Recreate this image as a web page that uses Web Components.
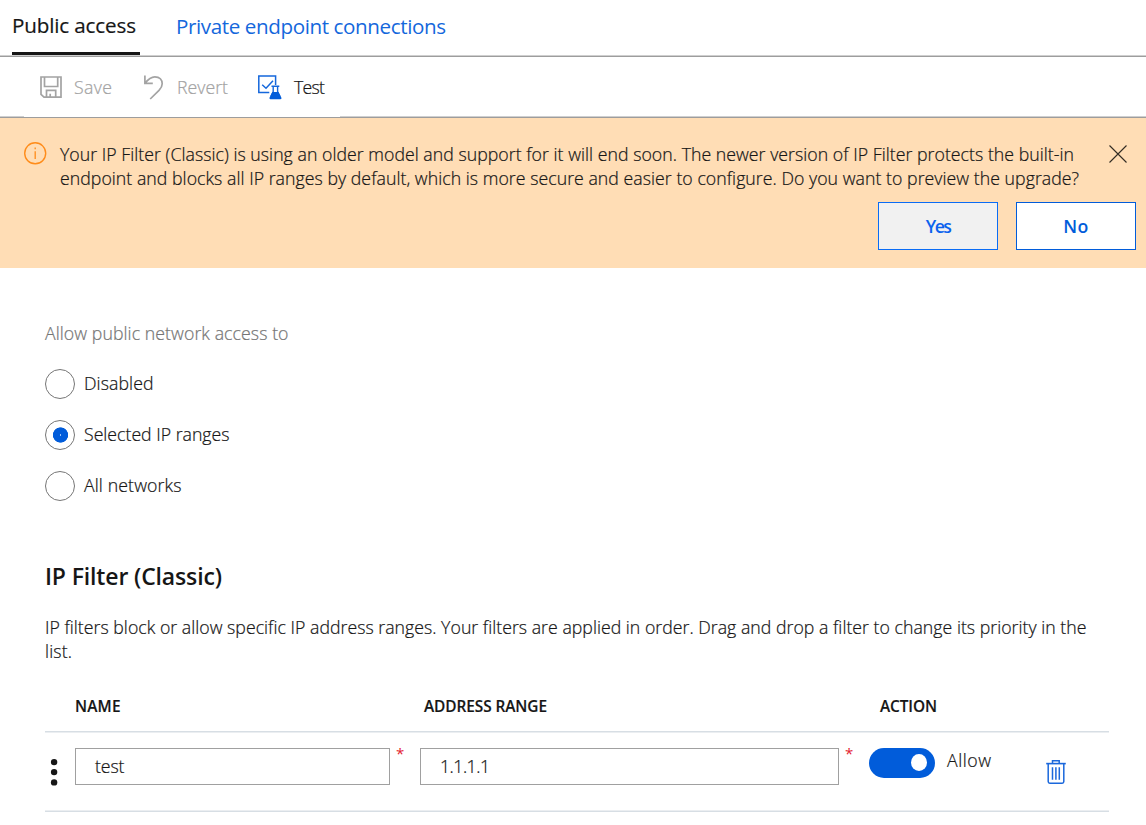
<!DOCTYPE html>
<html lang="en">
<head>
<meta charset="utf-8">
<title>Public access</title>
<style>
html,body{margin:0;background:#fff;overflow:hidden}
body{font-family:"Open Sans","Noto Sans",sans-serif;font-size:17.7px;font-weight:300;-webkit-text-stroke:.22px;color:#161616}
</style>
</head>
<body>
<network-page></network-page>
<script>
function define(name, html, setup) {
  const template = document.createElement('template');
  template.innerHTML = html;
  customElements.define(name, class extends HTMLElement {
    connectedCallback() {
      if (this.shadowRoot) return;
      this.attachShadow({mode: 'open'}).append(template.content.cloneNode(true));
      if (setup) setup(this, this.shadowRoot);
    }
  });
}

/* One line of text tracked to a given measure, set with the w attribute. */
define('text-line', `<style>
:host{display:block;white-space:pre;line-height:24px;height:24px}
span{display:inline-block}
</style><span><slot></slot></span>`, (el, root) => {
  const span = root.querySelector('span');
  const width = parseFloat(el.getAttribute('w'));
  const count = el.textContent.length;
  if (width && count > 1) {
    const extra = (width - span.getBoundingClientRect().width) / (count - 1);
    span.style.letterSpacing = extra.toFixed(4) + 'px';
  }
});

define('tab-bar', `<style>
:host{display:flex;box-sizing:border-box;height:57px;padding-left:12px;gap:36px;border-bottom:1px solid #9d9d9d;box-shadow:inset 0 -1px #cfcfcf;font-size:20.6px}
.tab{box-sizing:border-box;height:55px;padding-top:13px;font-weight:400;-webkit-text-stroke:0}
.active{width:128px;border-bottom:3px solid #161616;-webkit-text-stroke:.2px}
.link{color:#1467dc;padding-top:14px}
</style>
<div class="tab active"><text-line w="124">Public access</text-line></div>
<div class="tab link"><text-line w="270">Private endpoint connections</text-line></div>`);

define('tool-button', `<style>
:host{display:flex;align-items:flex-start;color:#161616}
:host([disabled]){color:#a3a3a3}
::slotted(svg){display:block;flex:none}
</style><slot></slot>`);

define('command-bar', `<style>
:host{display:flex;box-sizing:border-box;height:61px;padding:18px 0 0 39px;border-bottom:1px solid #9d9d9d;
background:linear-gradient(90deg,#cfcfcf 24px,transparent 24px 340px,#cfcfcf 340px) 0 100%/100% 1px no-repeat}
svg{fill:none}
tool-button[disabled] svg{stroke:#a3a3a3}
.test svg{stroke:#1467dc}
.save{width:104px}.revert{width:113px}
</style>
<tool-button class="save" disabled><svg width="24" height="25" viewBox="0 0 24 25" stroke-width="1.7" style="margin-right:11px"><path d="M2 2H22V22.2H5L2 19.4ZM5.5 2V11.5H18.7V2M7.5 22V15.4H16.7V22M11.2 22V18.7"/></svg><text-line w="38">Save</text-line></tool-button>
<tool-button class="revert" disabled><svg width="22" height="25" viewBox="0 0 22 25" stroke-width="1.7" style="margin-right:12px"><path d="M1.9 0.5V8.4H9.8M2 8.2C4.5 5 7 1.8 11.8 1.8C16.8 1.8 19.2 5.2 19.2 8.7C19.2 11.4 17.8 13.5 16 15.4L7.2 24"/></svg><text-line w="51">Revert</text-line></tool-button>
<tool-button class="test"><svg width="25" height="25" viewBox="0 0 25 25" stroke-width="1.5" style="margin:0 12px 0 1px"><path d="M12.3 17.6H1.8V.9H18.6V10M5.2 9.8L9 13.2L16 5.7"/><path d="M14.5 11.3H22.3M16.2 11.5V16.5L13.8 21.5M20.6 11.5V16.5L23 21.5" stroke-width="1.4"/><path d="M15.4 17H21.4L24.3 22.6C24.8 23.6 24.3 24.2 23.4 24.2H13.5C12.5 24.2 12.2 23.4 12.6 22.6Z" fill="#015cda" stroke="none"/></svg><text-line w="31">Test</text-line></tool-button>`);

define('push-button', `<style>
:host{display:block;box-sizing:border-box;width:120px;height:48px;border:1px solid #015cda;background:#fff;color:#015cda;font-weight:600;-webkit-text-stroke:0;padding-top:11px}
:host([pressed]){background:#f1f1f1;border-color:#0a6cf5;color:#0a62ee}
::slotted(text-line){width:max-content;margin:0 auto}
</style><slot></slot>`);

define('upgrade-banner', `<style>
:host{display:grid;grid-template-columns:36px 1fr auto;box-sizing:border-box;height:150px;padding:24px 10px 0 24px;background:#ffddb5;grid-template-rows:60px 48px}
svg{display:block;fill:none}
.close{margin:3px 8px 0 0}
.buttons{grid-column:1/-1;display:flex;justify-content:flex-end;gap:18px}
</style>
<svg width="23" height="23" viewBox="0 0 23 23"><circle cx="11.2" cy="11.3" r="10.5" stroke="#ff8c1a" stroke-width="1.4"/><path d="M11.2 9.2V17M11.2 5.5V7.2" stroke="#ff8c1a" stroke-width="1.3"/></svg>
<div class="copy"><text-line w="1014">Your IP Filter (Classic) is using an older model and support for it will end soon. The newer version of IP Filter protects the built-in</text-line><text-line w="1019">endpoint and blocks all IP ranges by default, which is more secure and easier to configure. Do you want to preview the upgrade?</text-line></div>
<svg class="close" width="19" height="19" viewBox="0 0 19 19"><path d="M.5 .5L17.5 17.5M17.5 .5L.5 17.5" stroke="#332c24" stroke-width="1.1"/></svg>
<div class="buttons"><push-button pressed><text-line w="26">Yes</text-line></push-button><push-button><text-line w="25">No</text-line></push-button></div>`);

define('radio-option', `<style>
:host{display:flex;height:30px;margin-bottom:21px;gap:8px}
i{box-sizing:border-box;width:30px;height:30px;border:1px solid #767676;border-radius:50%;flex:none;margin-right:1px}
:host([checked]) i{background:radial-gradient(circle at 14.5px 14px,#9cc2f5 0 .5px,#015cda .9px 7.3px,transparent 7.9px)}
::slotted(text-line){margin-top:2px}
</style><i></i><slot></slot>`);

define('access-options', `<style>
:host{display:block;padding:53px 0 0 45px;height:246px;box-sizing:border-box}
.label{color:#757575;margin-bottom:24px}
</style>
<text-line class="label" w="243.5">Allow public network access to</text-line>
<radio-option><text-line w="69.5">Disabled</text-line></radio-option>
<radio-option checked><text-line w="145.5">Selected IP ranges</text-line></radio-option>
<radio-option><text-line w="97.5">All networks</text-line></radio-option>`);

define('text-box', `<style>
:host{display:block;box-sizing:border-box;height:37px;border:1px solid #a0a0a0;padding:5px 0 0 19px}
</style><slot></slot>`);

define('toggle-switch', `<style>
:host{display:flex;box-sizing:border-box;width:66px;height:30px;border-radius:15px;background:#015cda;padding:6px 0 0 42px}
i{width:16px;height:17px;border-radius:50%;background:#fff}
</style><i></i>`);

define('filter-table', `<style>
:host{display:block;width:1064px}
.head,.row{display:grid;grid-template-columns:30px 315px 30px 419px 30px 66px 1fr}
.head{box-sizing:border-box;height:37px;padding-top:1px;font-size:15.4px;font-weight:600;-webkit-text-stroke:.15px}
.row{box-sizing:border-box;height:81px;border-top:1px solid #d7dee4;border-bottom:1px solid #d7dee4;box-shadow:inset 0 1px #ebeef1,inset 0 -1px #ebeef1;padding-top:16px}
.n{grid-column:2}.a{grid-column:4;padding-left:4px}.c{grid-column:6;padding-left:11px}
.star{color:#e3202f;font-size:15px;font-weight:400;-webkit-text-stroke:0;height:18px;line-height:11px;padding-left:6px}
.grip{margin:9px 0 0 5px}
.end{display:flex}
.end text-line{margin-left:12px;width:44px}
.trash{margin:11px 0 0 54px}
svg{display:block;flex:none}
</style>
<div class="head"><text-line class="n" w="45.5">NAME</text-line><text-line class="a" w="123">ADDRESS RANGE</text-line><text-line class="c" w="57">ACTION</text-line></div>
<div class="row">
<svg class="grip" width="8" height="30" viewBox="0 0 8 30" fill="#161616"><circle cx="4.1" cy="5.1" r="3.2"/><circle cx="4.1" cy="15.1" r="3.2"/><circle cx="4.1" cy="25.4" r="3.2"/></svg>
<text-box><text-line w="29.5">test</text-line></text-box><text-line class="star">*</text-line>
<text-box><text-line w="50">1.1.1.1</text-line></text-box><text-line class="star">*</text-line>
<toggle-switch></toggle-switch>
<div class="end"><text-line w="44">Allow</text-line>
<svg class="trash" width="22" height="26" viewBox="0 0 22 26" fill="none" stroke="#1b68dc"><path d="M1.2 4.6H20.8" stroke-width="1.6"/><path d="M7.5 4.2V1.8H14.2V4.2M3.2 4.6V22.6Q3.2 24.2 4.8 24.2H17.2Q18.8 24.2 18.8 22.6V4.6" stroke-width="1.5"/><path d="M7.5 8.2V20.8M10.9 8.2V20.8M14.3 8.2V20.8" stroke-width="1.5"/></svg></div>
</div>`);

define('filter-section', `<style>
:host{display:block;padding:47px 0 0 45px}
.title{font-size:23px;font-weight:600;-webkit-text-stroke:0;height:30px;line-height:30px;margin-bottom:24px}
.copy{margin-bottom:31px}
</style>
<text-line class="title" w="177">IP Filter (Classic)</text-line>
<div class="copy"><text-line w="1041.5">IP filters block or allow specific IP address ranges. Your filters are applied in order. Drag and drop a filter to change its priority in the</text-line><text-line w="27">list.</text-line></div>
<filter-table></filter-table>`);

define('network-page', `<style>:host{display:block;width:1146px;height:825px;overflow:hidden}</style>
<tab-bar></tab-bar><command-bar></command-bar><upgrade-banner></upgrade-banner><access-options></access-options><filter-section></filter-section>`);
</script>
</body>
</html>
